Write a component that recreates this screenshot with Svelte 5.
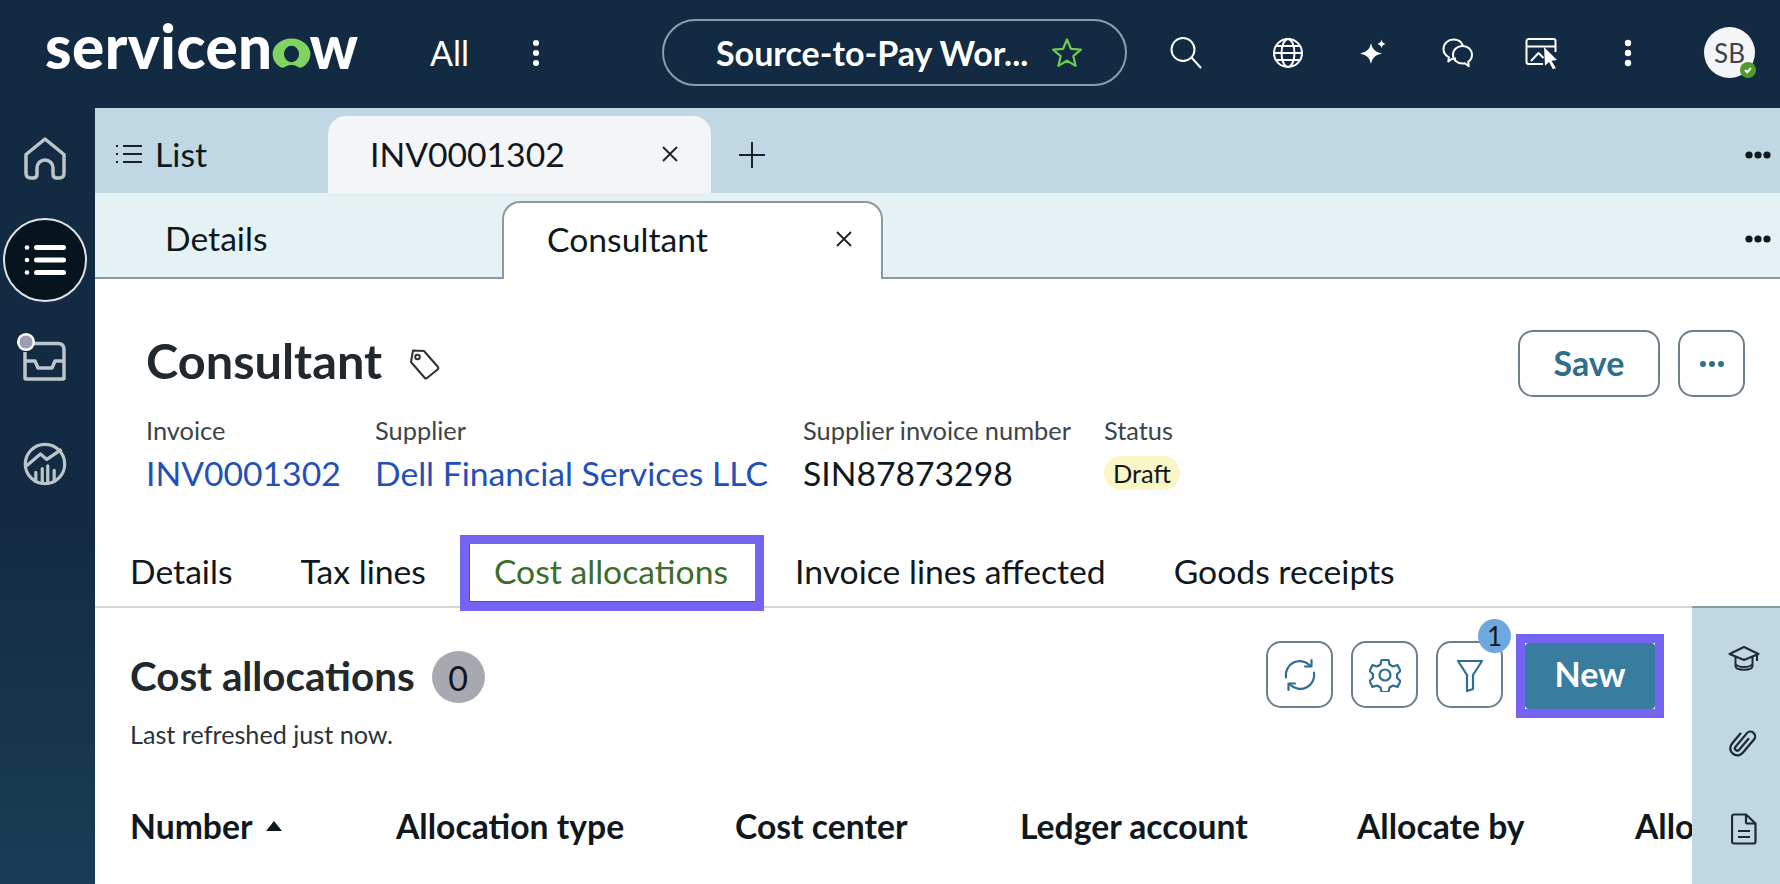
<script>
	let topIcons = ['search', 'globe', 'spark', 'chat', 'board', 'dots'];
	let metaItems = [
		{ label: 'Invoice', value: 'INV0001302', link: true, width: 229 },
		{ label: 'Supplier', value: 'Dell Financial Services LLC', link: true, width: 428 },
		{ label: 'Supplier invoice number', value: 'SIN87873298', width: 301 }
	];
	let recordTabs = ['Details', 'Tax lines', 'Cost allocations', 'Invoice lines affected', 'Goods receipts'];
	let columns = [
		{ name: 'Number', width: 266, sorted: true },
		{ name: 'Allocation type', width: 339 },
		{ name: 'Cost center', width: 285 },
		{ name: 'Ledger account', width: 337 },
		{ name: 'Allocate by', width: 278 },
		{ name: 'Allocation', width: 200 }
	];
</script>

<div class="app">
	<header class="topbar">
		<div class="logo" aria-label="servicenow">
			<span>servicen</span>
			<svg class="logo-o" width="39" height="31" viewBox="0 0 40 32">
				<path fill="#81d35f" fill-rule="evenodd" d="M20 .5C9 .5 .5 8.500 .5 16c0 6.500 3.500 11.500 8 14 2 1.100 3.500.8 5-.2 4-2.600 9-2.600 13 0 1.500 1 3 1.300 5 .2 4.500-2.500 8-7.500 8-14C39.500 8.500 31 .5 20 .5zm0 7.500a7.800 8.500 0 1 1 0 17 7.800 8.500 0 0 1 0-17z"/>
			</svg>
			<span>w</span>
		</div>
		<span class="all">All</span>
		<svg class="all-dots" width="12" height="28" viewBox="0 0 12 28" fill="#fff"><circle cx="6" cy="4" r="3"/><circle cx="6" cy="14" r="3"/><circle cx="6" cy="24" r="3"/></svg>
		<div class="pill">
			<span>Source-to-Pay Wor...</span>
			<svg width="32" height="32" viewBox="0 0 32 32" fill="none" stroke="#6fcb4f" stroke-width="2.200" stroke-linejoin="round"><path d="M16 2.500l3.900 9.300 10 .8-7.600 6.500 2.300 9.800L16 23.700l-8.600 5.200 2.300-9.800L2.100 12.600l10-.8z"/></svg>
		</div>
		<div class="top-icons">
			{#each topIcons as icon}
				<div class="top-icon">
					{#if icon === 'search'}
						<svg width="34" height="34" viewBox="0 0 34 34" fill="none" stroke="#fff" stroke-width="2"><circle cx="14" cy="13.500" r="11.500"/><path d="M22.500 21.500l9 10" stroke-linecap="round"/></svg>
					{:else if icon === 'globe'}
						<svg width="32" height="32" viewBox="0 0 32 32" fill="none" stroke="#fff" stroke-width="2"><circle cx="16" cy="16" r="14"/><ellipse cx="16" cy="16" rx="6.500" ry="14"/><path d="M2 16h28M4 9h24M4 23h24"/></svg>
					{:else if icon === 'spark'}
						<svg width="28" height="28" viewBox="0 0 28 28" fill="#fff"><path d="M12 4c1.300 6 3.600 8.700 11 10.500-7.400 1.800-9.700 4.500-11 10.500-1.300-6-3.600-8.700-11-10.500C8.400 12.700 10.700 10 12 4z"/><path d="M22.500 .5c.5 2.800 1.500 3.800 4.300 4.400-2.800.6-3.800 1.600-4.300 4.400-.5-2.800-1.500-3.800-4.300-4.400 2.800-.6 3.800-1.600 4.300-4.400z"/></svg>
					{:else if icon === 'chat'}
						<svg width="32" height="30" viewBox="0 0 32 30" fill="none" stroke="#fff" stroke-width="2" stroke-linejoin="round"><path d="M14 20.500c-1.300.3-2.800.4-4 .2l-3.700 2.800.6-4.200C3.500 17.500 1.500 14.500 1.500 11c0-5.500 4.500-9.500 10-9.500 4.600 0 8.300 2.600 9.500 6.400"/><path d="M20.500 8c5.500 0 9.500 4 9.500 8.800 0 3-1.400 5.500-3.800 7.100l.6 4.300-4-3c-.9.200-1.500.2-2.300.2-5.400 0-9.500-3.600-9.500-8.600S15.200 8 20.500 8z"/></svg>
					{:else if icon === 'board'}
						<svg width="36" height="32" viewBox="0 0 36 32" fill="none" stroke="#fff" stroke-width="2" stroke-linejoin="round"><path d="M18 27H3.500A2 2 0 0 1 1.500 25V4a2 2 0 0 1 2-2h25a2 2 0 0 1 2 2v11M1.500 9.500h29M6 24l7.500-8 5 5"/><path fill="#fff" stroke="none" d="M19 10l13 13-5.500.7 4.300 7.300-2.800 1.400-4-7.400-4 3.800z"/></svg>
					{:else}
						<svg width="12" height="28" viewBox="0 0 12 28" fill="#fff"><circle cx="6" cy="4" r="3.200"/><circle cx="6" cy="14" r="3.200"/><circle cx="6" cy="24" r="3.200"/></svg>
					{/if}
				</div>
			{/each}
		</div>
		<div class="avatar">
			SB
			<span class="presence"><svg width="10" height="10" viewBox="0 0 10 10" fill="none" stroke="#fff" stroke-width="2"><path d="M2 5l2.200 2.200L8 3"/></svg></span>
		</div>
	</header>

	<nav class="sidebar">
		<div class="side-item">
			<svg width="44" height="44" viewBox="0 0 44 44" fill="none" stroke="#bcc5ca" stroke-width="3.500" stroke-linejoin="round"><path d="M3 36V17.500L22 2l19 15.500V36q0 5-5 5h-2q-4 0-4-4v-6a8 8 0 0 0-16 0v6q0 4-4 4H8q-5 0-5-5z"/></svg>
		</div>
		<div class="side-item active">
			<svg width="42" height="32" viewBox="0 0 42 32" fill="#fff"><circle cx="3" cy="3.500" r="2.300"/><circle cx="3" cy="16" r="2.300"/><circle cx="3" cy="28.500" r="2.300"/><rect x="10" y="1" width="32" height="5" rx="2.500"/><rect x="10" y="13.500" width="32" height="5" rx="2.500"/><rect x="10" y="26" width="32" height="5" rx="2.500"/></svg>
		</div>
		<div class="side-item inbox">
			<svg class="inbox-icon" width="50" height="50" viewBox="0 0 50 50" fill="none" stroke="#bcc5ca" stroke-width="3.500" stroke-linejoin="round"><path d="M13 7.500h25q6 0 6 6V42a1 1 0 0 1-1 1H6a1 1 0 0 1-1-1V16"/><path d="M5 25h10l3 7h14l3-7h9"/><circle cx="6" cy="6" r="7.800" fill="#9c9db2" stroke="#fff" stroke-width="2.500"/></svg>
		</div>
		<div class="side-item">
			<svg width="48" height="48" viewBox="0 0 48 48" fill="none" stroke="#bcc5ca" stroke-width="3.500" stroke-linejoin="round"><circle cx="24" cy="24" r="21.500"/><path d="M4 26l15-13 7 6 16-11"/><path d="M14 43V33M21 45V29M27 45V26M34 43V31" stroke-linecap="round"/></svg>
		</div>
	</nav>

	<main class="workspace">
		<div class="tabs-top">
			<div class="list-tab">
				<svg width="26" height="20" viewBox="0 0 26 20" stroke="#1a2228" stroke-width="2"><path d="M7 2h19M7 10h19M7 18h19M0 2h2M0 10h2M0 18h2"/></svg>
				List
			</div>
			<div class="inv-tab">
				<span>INV0001302</span>
				<svg width="18" height="18" viewBox="0 0 18 18" stroke="#1a2228" stroke-width="1.800"><path d="M2 2l14 14M16 2L2 16"/></svg>
			</div>
			<svg class="plus" width="28" height="28" viewBox="0 0 28 28" stroke="#1a2228" stroke-width="2"><path d="M14 1v26M1 14h26"/></svg>
			<svg class="more" width="26" height="8" viewBox="0 0 26 8" fill="#10181d"><circle cx="4" cy="4" r="3.600"/><circle cx="13" cy="4" r="3.600"/><circle cx="22" cy="4" r="3.600"/></svg>
		</div>
		<div class="tabs-sub">
			<div class="sub-details">Details</div>
			<div class="sub-active">
				<span>Consultant</span>
				<svg width="18" height="18" viewBox="0 0 18 18" stroke="#1a2228" stroke-width="1.800"><path d="M2 2l14 14M16 2L2 16"/></svg>
			</div>
			<svg class="more" width="26" height="8" viewBox="0 0 26 8" fill="#10181d"><circle cx="4" cy="4" r="3.600"/><circle cx="13" cy="4" r="3.600"/><circle cx="22" cy="4" r="3.600"/></svg>
		</div>

		<section class="record">
			<div class="record-head">
				<h1>Consultant</h1>
				<svg class="tag" width="32" height="32" viewBox="0 0 32 32" fill="none" stroke="#2b3338" stroke-width="2" stroke-linejoin="round"><path d="M5 2.500L16 3l14 16q1 2-1 3l-10 8q-2 1-3-1L3 14z"/><circle cx="9.500" cy="9" r="2.300"/></svg>
				<button class="btn save">Save</button>
				<button class="btn square">
					<svg width="26" height="8" viewBox="0 0 26 8" fill="#2e6f8e"><circle cx="4" cy="4" r="3"/><circle cx="13" cy="4" r="3"/><circle cx="22" cy="4" r="3"/></svg>
				</button>
			</div>
			<div class="meta">
				{#each metaItems as item}
					<div class="meta-item" style="width: {item.width}px">
						<div class="meta-label">{item.label}</div>
						<div class="meta-value" class:link={item.link}>{item.value}</div>
					</div>
				{/each}
				<div class="meta-item">
					<div class="meta-label">Status</div>
					<div class="status">Draft</div>
				</div>
			</div>
		</section>

		<div class="record-tabs">
			{#each recordTabs as tab}
				<div class="record-tab" class:selected={tab === 'Cost allocations'}>{tab}</div>
			{/each}
		</div>

		<div class="lower">
			<div class="list-area">
				<div class="list-head">
					<div class="list-title">
						<div class="title-row">
							<h2>Cost allocations</h2>
							<span class="count">0</span>
						</div>
						<div class="refreshed">Last refreshed just now.</div>
					</div>
					<div class="list-actions">
						<button class="btn square">
							<svg width="34" height="34" viewBox="0 0 34 34" fill="none" stroke="#2e6f8e" stroke-width="2.200" stroke-linejoin="round" stroke-linecap="round"><path d="M3 19.500A14 14 0 0 1 27 7.500"/><path d="M31 14.500A14 14 0 0 1 7 26.500"/><path d="M28.500 2v6.500H22M5.500 32v-6.500H12"/></svg>
						</button>
						<button class="btn square">
							<svg width="32" height="34" viewBox="0 0 32 34" fill="none" stroke="#2e6f8e" stroke-width="2.200" stroke-linejoin="round"><path d="M12.500 2h7l1 4.500 3.500 2 4.500-1.400 3 5.900-3.400 3 0 4 3.400 3-3 5.900-4.500-1.400-3.500 2-1 4.500h-7l-1-4.500-3.500-2-4.500 1.400-3-5.900 3.400-3 0-4-3.400-3 3-5.900 4.500 1.400 3.500-2z"/><circle cx="16" cy="17" r="5.500"/></svg>
						</button>
						<button class="btn square filter">
							<svg width="28" height="34" viewBox="0 0 28 34" fill="none" stroke="#2e6f8e" stroke-width="2.200" stroke-linejoin="round"><path d="M2 3h24l-9 14v14l-6 2V17z"/></svg>
							<span class="filter-count">1</span>
						</button>
						<div class="new-frame">
							<button class="new">New</button>
						</div>
					</div>
				</div>
				<div class="columns">
					{#each columns as col}
						<div class="column" style="flex: 0 0 {col.width}px">
							{col.name}
							{#if col.sorted}
								<svg width="18" height="12" viewBox="0 0 18 12" fill="#10181d"><path d="M9 1l8 10H1z"/></svg>
							{/if}
						</div>
					{/each}
				</div>
			</div>
			<aside class="rail">
				<svg width="32" height="32" viewBox="0 0 32 32" fill="none" stroke="#1d2a33" stroke-width="2" stroke-linejoin="round"><path d="M1.500 11L16 4l14.500 7L16 17z"/><path d="M7.500 14v9c0 5 17 5 17 0v-9M7.500 21c3 4 14 4 17 0M29 11v7"/></svg>
				<svg width="30" height="34" viewBox="0 0 30 36" fill="none" stroke="#1d2a33" stroke-width="2.400" stroke-linecap="round" stroke-linejoin="round"><path d="M15 11v15a2.500 2.500 0 0 1-5 0V7.500a5 5 0 0 1 10 0v18.500a7.500 7.500 0 0 1-15 0V12" transform="rotate(40 15 18)"/></svg>
				<svg width="26" height="32" viewBox="0 0 26 32" fill="none" stroke="#1d2a33" stroke-width="2.200" stroke-linejoin="round"><path d="M3 1.500h12l9.500 9v18a2 2 0 0 1-2 2H3a2 2 0 0 1-2-2v-25a2 2 0 0 1 2-2z"/><path d="M15 1.500V9a1.500 1.500 0 0 0 1.500 1.500h8M7 18h12M7 24h12"/></svg>
			</aside>
		</div>
	</main>
</div>

<style>
	:global(body) {
		margin: 0;
		background: #fff;
	}
	.app {
		width: 1780px;
		height: 884px;
		display: grid;
		grid-template-columns: 95px 1fr;
		grid-template-rows: 108px 1fr;
		overflow: hidden;
		font-family: Lato, "Liberation Sans", sans-serif;
		color: #10181d;
		background: linear-gradient(180deg, #122b42 0%, #122b42 60%, #1a3d55 100%);
	}
	button {
		font-family: inherit;
		padding: 0;
		cursor: pointer;
	}

	/* top bar */
	.topbar {
		grid-column: 1 / 3;
		display: flex;
		align-items: center;
		padding-bottom: 3px;
		box-sizing: border-box;
		background: #122b42;
		color: #fff;
	}
	.logo {
		display: flex;
		align-items: baseline;
		width: 313px;
		margin: 0 0 14px 45px;
		font-size: 60px;
		font-weight: 900;
		line-height: 1;
		letter-spacing: 0.5px;
	}
	.logo-o {
		flex: none;
		margin: 0 -1px;
	}
	.all {
		margin-left: 72px;
		font-size: 34px;
	}
	.all-dots {
		margin-left: 61px;
	}
	.pill {
		display: flex;
		align-items: center;
		gap: 23px;
		box-sizing: border-box;
		width: 465px;
		height: 67px;
		margin-left: 120px;
		padding-left: 52px;
		border: 2px solid #8d9eab;
		border-radius: 34px;
		font-size: 34px;
		font-weight: 700;
		white-space: nowrap;
	}
	.top-icons {
		display: flex;
		margin-left: 39px;
	}
	.top-icon {
		display: flex;
		justify-content: center;
		align-items: center;
		width: 40px;
		margin-right: 45px;
	}
	.top-icon:first-child {
		margin-right: 62px;
	}
	.top-icon:last-child {
		margin-right: 0;
	}
	.avatar {
		position: relative;
		display: flex;
		justify-content: center;
		align-items: center;
		width: 51px;
		height: 51px;
		margin-left: 56px;
		border-radius: 50%;
		background: #f4f5f7;
		color: #3b4348;
		font-size: 26px;
	}
	.presence {
		position: absolute;
		right: -1px;
		bottom: 0;
		display: flex;
		justify-content: center;
		align-items: center;
		width: 16px;
		height: 16px;
		border-radius: 50%;
		background: #4f9a2b;
	}

	/* left nav */
	.sidebar {
		display: flex;
		flex-direction: column;
		align-items: center;
		padding: 29px 5px 0 0;
	}
	.side-item {
		display: flex;
		justify-content: center;
		align-items: center;
		width: 44px;
		height: 44px;
		margin-bottom: 37px;
	}
	.side-item.active {
		flex: none;
		width: 80px;
		height: 80px;
		border: 2px solid #dfe3e6;
		border-radius: 50%;
		background: #06141d;
	}
	.side-item.inbox {
		margin-bottom: 59px;
	}
	.inbox-icon {
		overflow: visible;
	}

	/* tab rows */
	.workspace {
		display: flex;
		flex-direction: column;
		min-width: 0;
		background: #fff;
	}
	.tabs-top,
	.tabs-sub {
		display: flex;
		flex: none;
		box-sizing: border-box;
		height: 85px;
		font-size: 33.700px;
	}
	.tabs-top {
		background: #bfd8e4;
		align-items: flex-end;
	}
	.list-tab {
		display: flex;
		align-items: center;
		gap: 13px;
		align-self: center;
		box-sizing: border-box;
		width: 233px;
		padding: 6px 0 0 21px;
	}
	.inv-tab {
		display: flex;
		align-items: center;
		justify-content: space-between;
		box-sizing: border-box;
		width: 383px;
		height: 77px;
		padding: 0 32px 2px 42px;
		border-radius: 18px 18px 0 0;
		background: #f4f5f7;
	}
	.plus {
		align-self: center;
		margin: 8px 0 0 27px;
	}
	.more {
		align-self: center;
		margin: 8px 9px 0 auto;
	}
	.tabs-sub {
		height: 86px;
		background: #e6f1f4;
		border-bottom: 2px solid #8a9aa2;
		align-items: flex-end;
	}
	.sub-details {
		align-self: center;
		box-sizing: border-box;
		width: 407px;
		padding: 6px 0 0 70px;
	}
	.sub-active {
		display: flex;
		align-items: center;
		justify-content: space-between;
		box-sizing: border-box;
		width: 381px;
		height: 78px;
		margin-bottom: -2px;
		padding: 0 28px 5px 43px;
		border: 2px solid #8a9aa2;
		border-bottom: 0;
		border-radius: 18px 18px 0 0;
		background: #fff;
	}

	/* record header */
	.record {
		flex: none;
		box-sizing: border-box;
		height: 244px;
		padding: 51px 35px 0 51px;
	}
	.record-head {
		display: flex;
		align-items: center;
		height: 67px;
	}
	h1 {
		margin: 0;
		padding-bottom: 7px;
		font-size: 48.700px;
		font-weight: 700;
		color: #21292e;
	}
	.tag {
		margin-left: 26px;
		margin-right: auto;
	}
	.btn {
		display: flex;
		justify-content: center;
		align-items: center;
		box-sizing: border-box;
		height: 67px;
		border: 2px solid #6d7f88;
		border-radius: 15px;
		background: #fff;
	}
	.save {
		width: 142px;
		margin-right: 18px;
		padding-bottom: 3px;
		color: #2e6f8e;
		font-size: 34px;
		font-weight: 700;
	}
	.square {
		width: 67px;
	}
	.meta {
		display: flex;
		margin-top: 18px;
	}
	.meta-label {
		font-size: 25.400px;
		line-height: 30px;
		color: #3b4449;
	}
	.meta-value {
		margin-top: 8px;
		font-size: 33.700px;
		line-height: 40px;
	}
	.link {
		color: #2250b8;
	}
	.status {
		display: inline-block;
		margin-top: 11px;
		padding: 0 9px;
		border-radius: 17px;
		background: #fbf6c6;
		font-size: 25.400px;
		line-height: 34px;
	}

	/* record tabs */
	.record-tabs {
		display: flex;
		flex: none;
		box-sizing: border-box;
		height: 85px;
		padding: 21px 0 0 35px;
		gap: 68px;
		border-bottom: 2px solid #d0d6da;
		font-size: 33.700px;
	}
	.record-tab {
		height: 58px;
		line-height: 54px;
		white-space: nowrap;
	}
	.selected {
		margin: 0 -28px 0 -25px;
		padding: 0 27px 0 25px;
		outline: 9px solid #7563f2;
		color: #3c6e28;
		box-shadow: inset 1px -1px 0 #3c6e28;
	}

	/* list */
	.lower {
		flex: 1;
		display: flex;
		min-height: 0;
	}
	.list-area {
		flex: 1;
		min-width: 0;
		overflow: hidden;
	}
	.list-head {
		display: flex;
		justify-content: space-between;
		padding: 33px 28px 0 35px;
	}
	h2 {
		margin: 0;
		padding-bottom: 4px;
		font-size: 40.300px;
		font-weight: 700;
		color: #21292e;
	}
	.title-row {
		display: flex;
		align-items: center;
		gap: 17px;
		height: 52px;
		margin-top: 10px;
	}
	.count {
		display: flex;
		justify-content: center;
		align-items: center;
		width: 53px;
		height: 52px;
		border-radius: 50%;
		background: #a8a9b0;
		font-size: 34px;
	}
	.refreshed {
		margin-top: 16px;
		font-size: 25.200px;
		line-height: 30px;
		color: #2b3338;
	}
	.list-actions {
		display: flex;
		align-items: flex-start;
		gap: 18px;
	}
	.filter {
		position: relative;
	}
	.filter-count {
		position: absolute;
		top: -24px;
		right: -10px;
		width: 33px;
		height: 34px;
		line-height: 34px;
		border-radius: 50%;
		background: #6fa8dc;
		color: #10181d;
		font-size: 26px;
		text-align: center;
	}
	.new-frame {
		display: flex;
		margin: -7px 0 0 -5px;
		border: 9px solid #7563f2;
		background: #fff;
	}
	.new {
		width: 130px;
		height: 66px;
		padding-bottom: 5px;
		border: 0;
		border-radius: 4px;
		background: #387c9f;
		color: #fff;
		font-size: 34px;
		font-weight: 700;
	}
	.columns {
		display: flex;
		align-items: center;
		margin-top: 57px;
		padding-left: 35px;
		font-size: 33.700px;
		font-weight: 700;
		white-space: nowrap;
	}
	.column {
		display: flex;
		align-items: center;
		gap: 12px;
	}
	.rail {
		flex: none;
		display: flex;
		flex-direction: column;
		align-items: center;
		gap: 52px;
		box-sizing: border-box;
		width: 88px;
		margin-top: -2px;
		padding: 35px 0 0 16px;
		border-top: 2px solid #8a9aa2;
		background: #bfd8e4;
	}
</style>
